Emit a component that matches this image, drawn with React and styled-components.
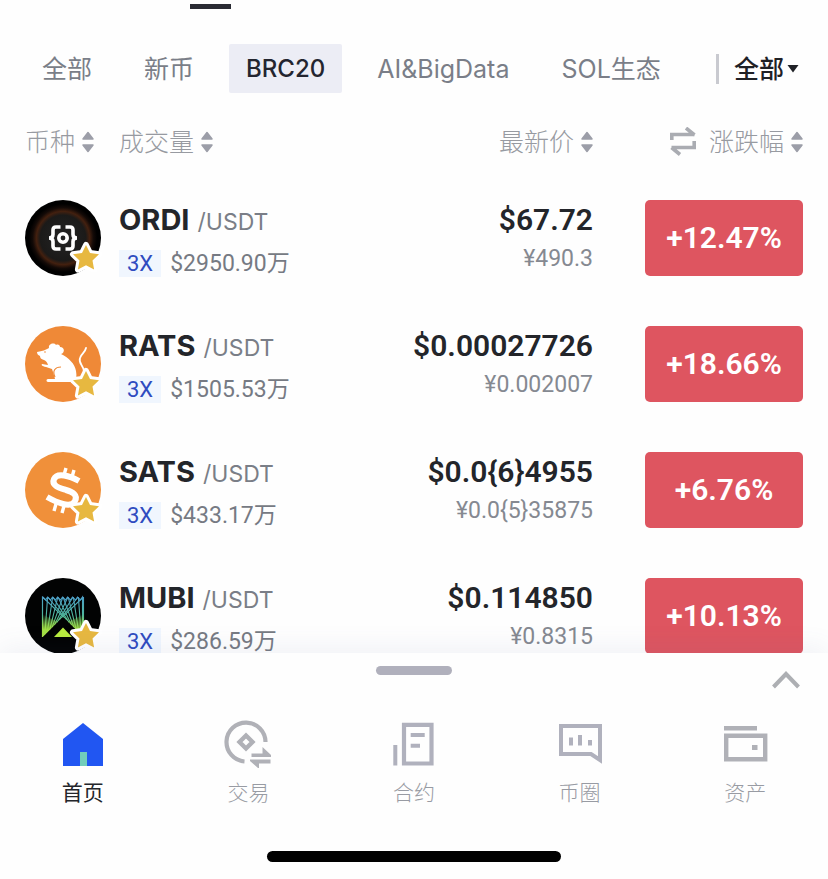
import React, { useState } from "react";
import styled, { createGlobalStyle } from "styled-components";

const latin = '"Inter", "Noto Sans CJK SC", sans-serif';
const numeric = '"Roboto", "Noto Sans CJK SC", sans-serif';

const GlobalStyle = createGlobalStyle`
  *, *::before, *::after { box-sizing: border-box; }
  body { margin: 0; background: #fefefe; color: #23252a; font-family: ${latin}; }
  button, select { margin: 0; padding: 0; border: 0; background: none; color: inherit; font: inherit; cursor: pointer; }
  svg { display: block; flex: none; }
`;

const Screen = styled.div`
  display: flex;
  flex-direction: column;
  height: 100vh;
  background: #fefefe;
`;

const SectionMarker = styled.div`
  flex: none;
  width: 41px;
  height: 5px;
  margin: 4px 0 35px 190px;
  background: #2a2b33;
`;

const FilterBar = styled.nav`
  flex: none;
  display: flex;
  align-items: center;
  justify-content: space-between;
  padding: 0 29px 0 25px;
`;

const Tabs = styled.div`
  display: flex;
  gap: 18px;
`;

const Tab = styled.button`
  height: 49px;
  padding: 0 17px;
  border-radius: 2px;
  font-size: ${(p) => (p.$active ? 24 : 25)}px;
  font-weight: ${(p) => (p.$active ? 500 : 400)};
  line-height: 50px;
  white-space: nowrap;
  color: ${(p) => (p.$active ? "#23252f" : "#7a7e88")};
  background: ${(p) => (p.$active ? "#ecedf5" : "transparent")};
`;

const ScopeField = styled.label`
  display: flex;
  align-items: center;
  gap: 3px;
  height: 30px;
  padding-left: 15px;
  border-left: 3px solid #c9cad0;
`;

const ScopeSelect = styled.select`
  appearance: none;
  width: 50px;
  height: 36px;
  font-size: 25px;
  font-weight: 500;
  color: #1f2126;
`;

const MarketList = styled.main`
  flex: 1;
  min-height: 0;
  padding: 0 25px;
  overflow-y: auto;
  scrollbar-width: none;
`;

const MarketTable = styled.table`
  width: 100%;
  table-layout: fixed;
  border-collapse: collapse;
`;

const HeadCell = styled.th`
  width: ${(p) => p.$width || "auto"};
  height: 107px;
  padding: 31px 0 0;
  vertical-align: top;
  font-weight: 300;
`;

const HeadGroup = styled.div`
  display: flex;
  align-items: center;
  justify-content: ${(p) => (p.$end ? "flex-end" : "flex-start")};
  gap: ${(p) => (p.$end ? 12 : 25)}px;
`;

const SortButton = styled.button`
  display: flex;
  align-items: center;
  gap: 7px;
  font-size: 25px;
  line-height: 36px;
  color: #979aa1;
  white-space: nowrap;
`;

const Cell = styled.td`
  height: 126px;
  padding: ${(p) => (p.$price ? "0 52px 0 0" : "0")};
  vertical-align: top;
  text-align: right;
  white-space: nowrap;
`;

const PriceHeadCell = styled(HeadCell)`
  padding-right: 52px;
`;

const Coin = styled.div`
  display: flex;
  gap: 18px;
  text-align: left;
`;

const Avatar = styled.div`
  position: relative;
  width: 76px;
  height: 76px;
`;

const StarBadge = styled.svg`
  position: absolute;
  right: -2px;
  bottom: 0;
`;

const PairName = styled.div`
  display: flex;
  align-items: baseline;
  gap: 8px;
  font-size: 23px;
  line-height: 40px;
  color: #7a7e87;
`;

const Symbol = styled.strong`
  font-size: 29px;
  font-weight: 700;
  color: #23252a;
`;

const VolumeLine = styled.div`
  display: flex;
  align-items: center;
  gap: 9px;
  margin-top: 8px;
  font: 400 23px/27px ${numeric};
  color: #767a83;
`;

const Leverage = styled.span`
  padding: 0 8px;
  background: #f0f6fe;
  font-size: 22px;
  color: #2f4bc0;
`;

const Price = styled.div`
  font: 600 30px/40px ${numeric};
  color: #23252a;
`;

const LocalPrice = styled.div`
  margin-top: 6px;
  font: 400 23px/26px ${numeric};
  color: #858991;
`;

const ChangeButton = styled.button`
  width: 158px;
  height: 76px;
  border-radius: 5px;
  background: #de5560;
  color: #fff;
  font: 600 30px/76px ${numeric};
  text-align: center;
`;

const Sheet = styled.footer`
  flex: none;
  z-index: 1;
  padding: 13px 0 17px;
  background: #fefefe;
  box-shadow: 0 -6px 24px rgba(90, 100, 150, 0.08);
`;

const SheetHeader = styled.div`
  display: grid;
  grid-template-columns: 1fr auto 1fr;
  align-items: start;
  padding: 0 28px;
`;

const Grabber = styled.button`
  grid-column: 2;
  width: 76px;
  height: 9px;
  border-radius: 5px;
  background: #b0b0bc;
`;

const ExpandButton = styled.button`
  justify-self: end;
  padding-top: 5px;
`;

const TabBar = styled.nav`
  display: grid;
  grid-template-columns: repeat(5, 1fr);
  padding: 31px 0 43px;
`;

const TabLink = styled.a`
  display: flex;
  flex-direction: column;
  align-items: center;
  gap: 10px;
  font-size: 21px;
  font-weight: ${(p) => (p.$active ? 400 : 300)};
  line-height: 30px;
  text-decoration: none;
  color: ${(p) => (p.$active ? "#23252a" : "#989ba3")};
`;

const HomeIndicator = styled.div`
  width: 294px;
  height: 11px;
  margin: 0 auto;
  border-radius: 6px;
  background: #000;
`;

const SortArrows = () => (
  <svg width="12" height="22" viewBox="0 0 12 22" fill="#9c9ea8" stroke="#9c9ea8" strokeWidth="1.5" strokeLinejoin="round" aria-hidden="true">
    <path d="M6 1.5 11 8H1Z" />
    <path d="M6 20.5 11 14H1Z" />
  </svg>
);

const SwapIcon = () => (
  <svg width="28" height="30" viewBox="0 0 28 30" fill="none" stroke="#aaacb2" strokeWidth="3.6" aria-hidden="true">
    <path d="M2.8 13V7.5H25.5M17 1l8.5 7" />
    <path d="M25.2 14v6.5H2.5M11 27.5l-8.5-7" />
  </svg>
);

const Caret = () => (
  <svg width="12" height="9" viewBox="0 0 12 9" aria-hidden="true">
    <path d="M0.5 1h11L6 8.5Z" fill="#1f2126" />
  </svg>
);

const ChevronUp = () => (
  <svg width="28" height="18" viewBox="0 0 28 18" fill="none" stroke="#adafb3" strokeWidth="4" aria-hidden="true">
    <path d="M1.5 16 14 3l12.5 13" />
  </svg>
);

const Star = () => (
  <StarBadge width="34" height="36" viewBox="0 0 34 36" aria-hidden="true">
    <path d="M17 5l4 8 9 1.3-6.5 6.3 1.6 9-8.1-4.3-8.1 4.3 1.6-9-6.5-6.3 9-1.3Z" fill="#e7b840" stroke="#fff" strokeWidth="6" strokeLinejoin="round" paintOrder="stroke" />
  </StarBadge>
);

const OrdiLogo = () => (
  <svg width="76" height="76" viewBox="0 0 76 76" aria-hidden="true">
    <defs>
      <radialGradient id="ordiGlow">
        <stop offset="0" stopColor="#242424" />
        <stop offset="0.6" stopColor="#1b1a19" />
        <stop offset="0.7" stopColor="#43200f" />
        <stop offset="0.8" stopColor="#130a07" />
        <stop offset="0.9" stopColor="#000" />
      </radialGradient>
    </defs>
    <circle cx="38" cy="38" r="38" fill="url(#ordiGlow)" />
    <g fill="none" stroke="#fff" strokeWidth="3.6">
      <path d="M35.5 27h-4.5q-3 0-3 3v4.5q0 3.500-4 3.5 4 0 4 3.5V46q0 3 3 3h4.5" />
      <path d="M40.5 27h4.5q3 0 3 3v4.5q0 3.500 4 3.5-4 0-4 3.5V46q0 3-3 3h-4.5" />
      <circle cx="38" cy="38" r="4.2" />
    </g>
  </svg>
);

const RatsLogo = () => (
  <svg width="76" height="76" viewBox="0 0 76 76" aria-hidden="true">
    <circle cx="38" cy="38" r="38" fill="#ef8937" />
    <path d="M12 26c5-1 9-2 12-4-1-4 5-6 7-3 2-1 4 0 4 2 5 0 5 6 1 7 8 4 14 10 15 17 1 5 0 9-1 11H23c-2 0-2-3 0-3h7c-1-4-2-7-3-10l-6-2c-4-1-5-2-4-3l6 1c-1-3-2-4-4-5-3-1-4-2-4-4-2-1-3-2-3-4Z" fill="#fff" />
    <path d="M30 51c-3-6 0-10 6-10" fill="none" stroke="#ef8937" strokeWidth="1.2" />
    <path d="M47 56c7 0 12-5 12-10 0-7-6-8-4-14 1-4 5-5 6-10" fill="none" stroke="#fff" strokeWidth="1.8" strokeLinecap="round" />
    <circle cx="20" cy="26" r="0.8" fill="#ef8937" />
  </svg>
);

const SatsLogo = () => (
  <svg width="76" height="76" viewBox="0 0 76 76" aria-hidden="true">
    <circle cx="38" cy="38" r="38" fill="#f0903a" />
    <g fill="none" stroke="#fff">
      <path d="M54 29C45 24 32 20 29 27c-3 7 6 9 12 11 7 2 12 5 9 11-4 8-19 1-28-4" strokeWidth="6" />
      <path d="M41 16l-2 7M49 18l-2 7M31 52l-2 7M39 54l-2 7" strokeWidth="3.4" />
    </g>
  </svg>
);

const fan = [0, 1, 2, 3, 4, 5, 6, 7, 8];

const MubiLogo = () => (
  <svg width="76" height="76" viewBox="0 0 76 76" aria-hidden="true">
    <defs>
      <linearGradient id="mubiFade" gradientUnits="userSpaceOnUse" x1="0" y1="18" x2="0" y2="59">
        <stop offset="0" stopColor="#4d9fcb" />
        <stop offset="0.5" stopColor="#4fb79a" />
        <stop offset="1" stopColor="#b5ea3c" />
      </linearGradient>
      <linearGradient id="mubiBase" x1="0" y1="0" x2="0" y2="1">
        <stop offset="0" stopColor="#7fd05a" stopOpacity="0" />
        <stop offset="0.7" stopColor="#a4e045" />
      </linearGradient>
    </defs>
    <circle cx="38" cy="38" r="38" fill="#020303" />
    <g stroke="url(#mubiFade)" strokeWidth="1.1" fill="none">
      {fan.map((i) => (
        <path key={i} d={`M${17.5 + i * 5.1} 19 L${17.5 + i * 2.4} ${59 - i * 2.4} M${58.5 - i * 5.1} 19 L${58.5 - i * 2.4} ${59 - i * 2.4}`} />
      ))}
      <path d="M17.5 59V19l3 3 2-3 3 3 2-3 3 3 2-3 3 3 2-3 3 3 2-3 3 3 2-3 3 3 2-3 3 3 2-3v40" />
    </g>
    <path d="M17 59V36L33 44 18 59ZM59 59V36L43 44 58 59Z" fill="url(#mubiBase)" />
    <path d="M38 39 58 59H18Z" fill="#020303" />
    <path d="M38 49.5 47 59H29Z" fill="#b8ec3f" />
  </svg>
);

const HomeIcon = () => (
  <svg width="48" height="48" viewBox="0 0 48 48" aria-hidden="true">
    <path d="M24 3 44 19v27H4V19Z" fill="#2156f2" />
    <path d="M21 32h7v14h-7Z" fill="#71cdbb" />
  </svg>
);

const TradeIcon = () => (
  <svg width="48" height="48" viewBox="0 0 48 48" fill="none" aria-hidden="true">
    <path d="M41.5 22A19.500 19.500 0 1 0 20.5 41.5" stroke="#b0b1b7" strokeWidth="4.2" />
    <path d="M22 15.5 28.5 22 22 28.5 15.5 22Z" stroke="#b0b1b7" strokeWidth="4.4" />
    <path d="M27.5 33.500H38.5V27L47 35v2H27.500ZM46.5 43.500H35V48h-1l-8-7v-1.500h20.500Z" fill="#b0b1b7" />
  </svg>
);

const ContractIcon = () => (
  <svg width="48" height="48" viewBox="0 0 48 48" fill="none" aria-hidden="true">
    <path d="M14 4.8h27.5v38.7H14Z" stroke="#b0b1bd" strokeWidth="4.2" />
    <path d="M3.3 25h4v20.500h-4ZM20.7 13h14v4h-14ZM20.7 23.700h9.300v4h-9.300Z" fill="#b0b1bd" />
  </svg>
);

const CommunityIcon = () => (
  <svg width="48" height="48" viewBox="0 0 48 48" fill="none" aria-hidden="true">
    <path d="M5 6h39v34l-9-6H5Z" stroke="#b0b1bd" strokeWidth="4" />
    <path d="M13 17.5h4v8h-4ZM22 15h4v10.500h-4ZM32 20h4v5.500h-4Z" fill="#b0b1bd" />
  </svg>
);

const WalletIcon = () => (
  <svg width="48" height="48" viewBox="0 0 48 48" fill="none" aria-hidden="true">
    <path d="M3 6h33v4.500H3ZM31 25h5.500v5H31Z" fill="#b0b1b7" />
    <path d="M5.2 15.700h39v23.600h-39Z" stroke="#b0b1b7" strokeWidth="4.4" />
  </svg>
);

const tabs = ["全部", "新币", "BRC20", "AI&BigData", "SOL生态"];

const coins = [
  { symbol: "ORDI", Logo: OrdiLogo, volume: "$2950.90万", price: "$67.72", local: "¥490.3", change: "+12.47%" },
  { symbol: "RATS", Logo: RatsLogo, volume: "$1505.53万", price: "$0.00027726", local: "¥0.002007", change: "+18.66%" },
  { symbol: "SATS", Logo: SatsLogo, volume: "$433.17万", price: "$0.0{6}4955", local: "¥0.0{5}35875", change: "+6.76%" },
  { symbol: "MUBI", Logo: MubiLogo, volume: "$286.59万", price: "$0.114850", local: "¥0.8315", change: "+10.13%" },
];

const destinations = [
  { label: "首页", Icon: HomeIcon, active: true },
  { label: "交易", Icon: TradeIcon },
  { label: "合约", Icon: ContractIcon },
  { label: "币圈", Icon: CommunityIcon },
  { label: "资产", Icon: WalletIcon },
];

const Sort = ({ children }) => (
  <SortButton type="button">
    {children}
    <SortArrows />
  </SortButton>
);

export default function App() {
  const [tab, setTab] = useState("BRC20");

  return (
    <Screen>
      <GlobalStyle />
      <SectionMarker />
      <FilterBar>
        <Tabs>
          {tabs.map((name) => (
            <Tab key={name} type="button" $active={name === tab} aria-pressed={name === tab} onClick={() => setTab(name)}>
              {name}
            </Tab>
          ))}
        </Tabs>
        <ScopeField>
          <ScopeSelect aria-label="全部">
            <option>全部</option>
          </ScopeSelect>
          <Caret />
        </ScopeField>
      </FilterBar>

      <MarketList>
        <MarketTable>
          <thead>
            <tr>
              <HeadCell scope="col">
                <HeadGroup>
                  <Sort>币种</Sort>
                  <Sort>成交量</Sort>
                </HeadGroup>
              </HeadCell>
              <PriceHeadCell scope="col" $width="260px">
                <HeadGroup $end>
                  <Sort>最新价</Sort>
                </HeadGroup>
              </PriceHeadCell>
              <HeadCell scope="col" $width="158px">
                <HeadGroup $end>
                  <button type="button" aria-label="切换">
                    <SwapIcon />
                  </button>
                  <Sort>涨跌幅</Sort>
                </HeadGroup>
              </HeadCell>
            </tr>
          </thead>
          <tbody>
            {coins.map(({ symbol, Logo, volume, price, local, change }) => (
              <tr key={symbol}>
                <Cell>
                  <Coin>
                    <Avatar>
                      <Logo />
                      <Star />
                    </Avatar>
                    <div>
                      <PairName>
                        <Symbol>{symbol}</Symbol>
                        <span>/USDT</span>
                      </PairName>
                      <VolumeLine>
                        <Leverage>3X</Leverage>
                        <span>{volume}</span>
                      </VolumeLine>
                    </div>
                  </Coin>
                </Cell>
                <Cell $price>
                  <Price>{price}</Price>
                  <LocalPrice>{local}</LocalPrice>
                </Cell>
                <Cell>
                  <ChangeButton type="button">{change}</ChangeButton>
                </Cell>
              </tr>
            ))}
          </tbody>
        </MarketTable>
      </MarketList>

      <Sheet>
        <SheetHeader>
          <Grabber type="button" aria-label="拖动" />
          <ExpandButton type="button" aria-label="展开">
            <ChevronUp />
          </ExpandButton>
        </SheetHeader>
        <TabBar>
          {destinations.map(({ label, Icon, active }) => (
            <TabLink key={label} href="#" $active={active} aria-current={active ? "page" : undefined}>
              <Icon />
              <span>{label}</span>
            </TabLink>
          ))}
        </TabBar>
        <HomeIndicator />
      </Sheet>
    </Screen>
  );
}
